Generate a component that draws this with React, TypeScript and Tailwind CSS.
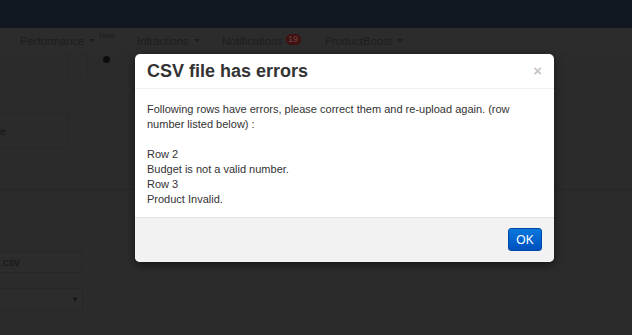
import React from 'react';

const Caret = () => (
  <span className="ml-[5px] inline-block h-0 w-0 border-x-[3px] border-t-[3px] border-x-transparent border-t-[#1c1c1c]" />
);

const NavBar = () => (
  <div className="flex h-[26px] items-center bg-[#2c2c2c] pl-[20px] text-[11.2px] text-[#1d1d1d]">
    <div className="flex items-center">
      <span>Performance</span>
      <Caret />
      <span className="ml-[4px] -mt-[10px] text-[8px]">New</span>
    </div>
    <div className="ml-[22px] flex items-center">
      <span>Infractions</span>
      <Caret />
    </div>
    <div className="ml-[22px] flex items-center">
      <span>Notifications</span>
      <span className="ml-[3px] -mt-[3px] flex h-[11px] w-[15px] items-center justify-center rounded-full bg-[#421010] text-[9px] leading-none text-[#6a4848]">19</span>
    </div>
    <div className="ml-[24px] flex items-center">
      <span>ProductBoost</span>
      <Caret />
    </div>
  </div>
);

const Backdrop = () => (
  <div className="flex h-[281px] flex-col bg-[#2b2b2b]">
    <div className="relative flex h-[24px]">
      <div className="w-[68px] border-r border-[#282828]" />
      <div className="w-[20px] border-r border-[#282828]" />
      <div className="ml-[15px] mt-[2px] h-[7px] w-[7px] rounded-full bg-[#0d0d0d]" />
    </div>
    <div className="mt-[35px] flex h-[36px] w-[68px] items-center border border-l-0 border-[#272727] text-[11px] text-[#161616]">
      <span>e</span>
    </div>
    <div className="mt-[40px] h-px w-full bg-[#262626]" />
    <div className="mt-[61px] flex h-[22px] w-[82px] items-center rounded-r-[3px] border border-l-0 border-[#272727] bg-[#2c2c2c] text-[11px] text-[#161616]">
      <span>.csv</span>
    </div>
    <div className="mt-[15px] flex h-[23px] w-[83px] items-center justify-end rounded-r-[3px] border border-l-0 border-[#272727] bg-[#2c2c2c] pr-[3px] text-[8px] text-[#161616]">
      ▼
    </div>
  </div>
);

const Modal = () => (
  <div className="absolute left-[135px] top-[54px] w-[419px] overflow-hidden rounded-[5px] bg-white shadow-[0_3px_9px_rgba(0,0,0,0.5)]">
    <div className="flex h-[35px] items-center justify-between border-b border-[#efefef] px-[12px]">
      <h3 className="text-[18px] font-bold leading-none text-[#333]">CSV file has errors</h3>
      <span className="-mt-[2px] text-[15px] font-bold leading-none text-[#c4c4c4]">×</span>
    </div>
    <div className="px-[12px] pb-[10px] pt-[13px] text-[11px] leading-[15px] text-[#333]">
      <p>Following rows have errors, please correct them and re-upload again. (row number listed below) :</p>
      <p className="mt-[15px]">Row 2</p>
      <p>Budget is not a valid number.</p>
      <p>Row 3</p>
      <p>Product Invalid.</p>
    </div>
    <div className="flex h-[45px] items-start justify-end border-t border-[#e3e3e3] bg-[#f2f2f2] px-[12px] pt-[10px]">
      <button className="h-[23px] w-[34px] rounded-[3px] border border-[#0048a8] bg-gradient-to-b from-[#0a78dc] to-[#0050bf] text-[12px] text-white">
        OK
      </button>
    </div>
  </div>
);

export default function App() {
  return (
    <div className="relative h-[335px] w-[632px] overflow-hidden bg-[#2b2b2b] font-['Liberation_Sans',Arial,sans-serif]">
      <div className="h-[28px] bg-[#111820]" />
      <NavBar />
      <Backdrop />
      <Modal />
    </div>
  );
}
